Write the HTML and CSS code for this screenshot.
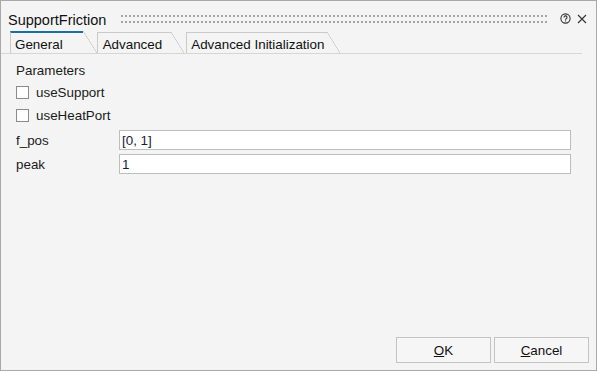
FILE: index.html
```html
<!DOCTYPE html>
<html lang="en">
<head>
    <meta charset="UTF-8">
    <meta name="viewport" content="width=device-width, initial-scale=1.0">
    <title>SupportFriction</title>
    <link rel="stylesheet" href="styles.css">
</head>
<body>

    <div class="window">
        <div class="titlebar">
            <span class="title">SupportFriction</span>
            <div class="grip"></div>
            <svg class="icon-help" width="11" height="11" viewBox="0 0 11 11">
                <circle cx="5.5" cy="5.5" r="4.6" fill="none" stroke="#333" stroke-width="1.1"/>
                <path d="M4 4.4a1.5 1.5 0 1 1 2.2 1.3c-.5.3-.7.6-.7 1.1" fill="none" stroke="#333" stroke-width="1.1"/>
                <rect x="5" y="7.4" width="1.1" height="1.1" fill="#333"/>
            </svg>
            <svg class="icon-close" width="10" height="10" viewBox="0 0 10 10">
                <path d="M1 1L9 9M9 1L1 9" stroke="#333" stroke-width="1.1"/>
            </svg>
        </div>

        <div class="tabs">
            <div class="tab active">General</div>
            <div class="tab">Advanced</div>
            <div class="tab last">Advanced Initialization</div>
        </div>

        <div class="panel">
            <div class="group-title">Parameters</div>

            <label class="check-row">
                <input type="checkbox" class="check">
                <span>useSupport</span>
            </label>
            <label class="check-row">
                <input type="checkbox" class="check">
                <span>useHeatPort</span>
            </label>

            <div class="field-row">
                <span class="field-label">f_pos</span>
                <input type="text" class="field" value="[0, 1]">
            </div>
            <div class="field-row">
                <span class="field-label">peak</span>
                <input type="text" class="field" value="1">
            </div>
        </div>

        <div class="buttons">
            <button type="button" class="btn"><u>O</u>K</button>
            <button type="button" class="btn"><u>C</u>ancel</button>
        </div>
    </div>

</body>
</html>
```

FILE: styles.css
```css
* {
    box-sizing: border-box;
}
body {
    margin: 0;
    font-family: "Liberation Sans", Arial, sans-serif;
    font-size: 13.4px;
    color: #1a1a1a;
    background-color: #f4f4f4;
}
.window {
    width: 597px;
    height: 371px;
    border: 1px solid #a9a9a9;
    background-color: #f4f4f4;
    display: flex;
    flex-direction: column;
}

/* titlebar */
.titlebar {
    height: 30px;
    display: flex;
    align-items: flex-start;
    padding: 11px 0 0 7px;
}
.title {
    font-size: 14.5px;
    line-height: 16px;
    color: #111;
}
.grip {
    flex: 1;
    height: 8px;
    margin: 3px 12px 0 15px;
    background-image:
        linear-gradient(to bottom, transparent 2px, #f4f4f4 2px),
        linear-gradient(to right, #a4a4a4 2px, transparent 2px);
    background-size: 4px 6px;
}
.icon-help {
    margin: 1px 6px 0 0;
}
.icon-close {
    margin: 2px 9px 0 0;
}

/* tabs */
.tabs {
    display: flex;
    align-items: flex-end;
    height: 23px;
    margin: 0 14px 0 0;
    padding-left: 9px;
    border-bottom: 1px solid #d6d6d6;
}
.tab {
    position: relative;
    height: 21px;
    padding: 4px 9px 0 5px;
    margin-right: 15px;
    line-height: 15px;
    border-top: 1px solid #cacaca;
    border-left: 1px solid #cacaca;
    color: #111;
}
.tab::after {
    content: "";
    position: absolute;
    left: 100%;
    top: -1px;
    bottom: 0;
    width: 13px;
    background: linear-gradient(to top right, transparent calc(50% - 0.6px), #c4c4c4 50%, transparent calc(50% + 0.6px));
}
.tab.active {
    height: 22px;
    padding: 4px 20px 0 4px;
    margin-right: 14px;
    border-top: 2px solid #1b6e9e;
}
.tab.active::after {
    top: -2px;
    width: 14px;
}
.tab.last {
    padding-right: 3px;
    padding-left: 4px;
}

/* panel */
.panel {
    flex: 1;
    padding: 9px 0 0 15px;
    display: flex;
    flex-direction: column;
}
.group-title {
    line-height: 15px;
    margin-bottom: 6px;
}
.check-row {
    display: flex;
    align-items: center;
    height: 16px;
    margin-bottom: 7px;
    line-height: 15px;
}
.check {
    appearance: none;
    width: 13px;
    height: 13px;
    margin: 0 7px 0 0;
    border: 1px solid #8c8c8c;
    background-color: #fff;
}
.field-row {
    display: flex;
    align-items: center;
    height: 20px;
    margin-bottom: 4px;
}
.field-label {
    width: 103px;
    line-height: 15px;
}
.field {
    width: 452px;
    height: 20px;
    padding: 0 2px;
    border: 1px solid #bdbdbd;
    background-color: #fff;
    font-family: "Liberation Sans", Arial, sans-serif;
    font-size: 13.4px;
    color: #14213d;
    outline: none;
}

/* buttons */
.buttons {
    display: flex;
    justify-content: flex-end;
    gap: 3px;
    padding: 0 7px 7px 0;
}
.btn {
    width: 95px;
    height: 26px;
    border: 1px solid #c3c3c3;
    background-color: #f6f6f6;
    font-family: "Liberation Sans", Arial, sans-serif;
    font-size: 13.4px;
    color: #111;
    padding: 0;
    cursor: pointer;
}
.btn:hover {
    background-color: #e8e8e8;
}
```
